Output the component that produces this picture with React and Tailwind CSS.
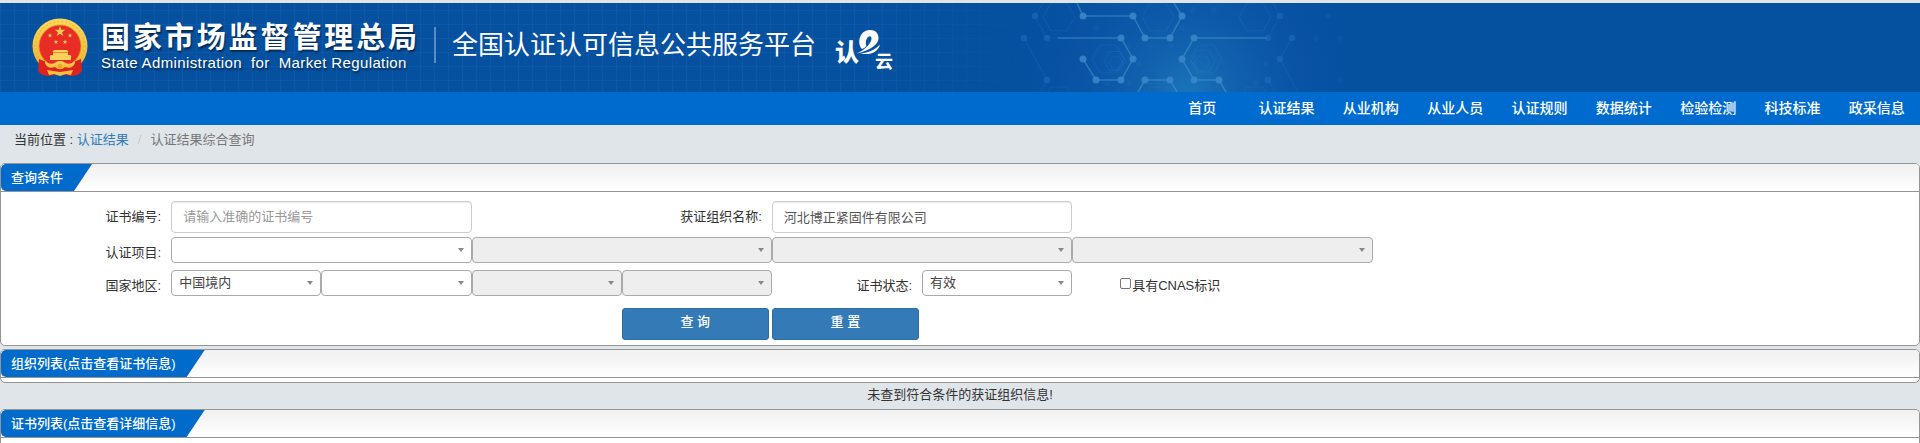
const FONT = "font-['Liberation_Sans','Noto_Sans_CJK_SC',sans-serif]";

const navItems = ["首页", "认证结果", "从业机构", "从业人员", "认证规则", "数据统计", "检验检测", "科技标准", "政采信息"];

const starPoints = (cx, cy, r) =>
  Array.from({ length: 10 }, (_, i) => {
    const a = (Math.PI / 5) * i - Math.PI / 2;
    const k = i % 2 ? r * 0.4 : r;
    return `${(cx + k * Math.cos(a)).toFixed(2)},${(cy + k * Math.sin(a)).toFixed(2)}`;
  }).join(" ");

const hexPoints = (cx, cy, r) =>
  Array.from({ length: 6 }, (_, i) => {
    const a = (Math.PI / 3) * i;
    return `${(cx + r * Math.cos(a)).toFixed(1)},${(cy + r * Math.sin(a)).toFixed(1)}`;
  }).join(" ");

function Emblem() {
  return (
    <svg viewBox="0 0 56 59" className="h-[59px] w-14 shrink-0" role="img" aria-label="国徽">
      <defs>
        <linearGradient id="gold" x1="0" y1="0" x2="0" y2="1">
          <stop offset="0" stopColor="#fbd85a" />
          <stop offset="1" stopColor="#eeb02c" />
        </linearGradient>
      </defs>
      <circle cx="28" cy="28" r="27.5" fill="url(#gold)" />
      <circle cx="28" cy="28" r="24.5" fill="none" stroke="#e0a32a" strokeWidth="1.5" strokeDasharray="2 2" opacity="0.4" />
      <circle cx="28" cy="28" r="21" fill="#ea2c27" stroke="#dd9426" strokeWidth="0.8" />
      <polygon points={starPoints(28, 13.5, 5.5)} fill="#f8cf4d" />
      <polygon points={starPoints(18, 17.5, 2.6)} fill="#f8c548" />
      <polygon points={starPoints(38, 17.5, 2.6)} fill="#f8c548" />
      <polygon points={starPoints(24, 24, 2.6)} fill="#f8c548" />
      <polygon points={starPoints(33, 24, 2.6)} fill="#f8c548" />
      <path d="M22 32h13l1.5 2h-16zM21 34.5h15v2.5H21zM18.5 37h20l1 2h-22zM18 39h21v3H18z" fill="#fad45a" />
      <path d="M7 41l10 4 11 3 11-3 10-4 1 12-4 4-7 1-11-2-11 2-7-1-4-4z" fill="#df221e" />
      <path d="M13 43c5 4 9 3 11 1 2-1.500 6-1.500 8 0 2 2 6 3 11-1 0 6-5 8-10 6-3 3-7 3-10 0-5 2-10 0-10-6z" fill="url(#gold)" />
      <path d="M15 52l6 1 7 1 7-1 6-1-2 5-5-1-6 2-6-2-5 1z" fill="#f5c240" />
      <circle cx="28" cy="48" r="2.200" fill="#e8a52b" />
    </svg>
  );
}

function CloudLogo() {
  return (
    <svg viewBox="0 0 60 44" className="h-11 w-[60px] shrink-0" fill="#fff" role="img" aria-label="认e云">
      <text x="1" y="32" fontSize="24" fontWeight="900" fontFamily="'Noto Sans CJK SC', sans-serif">认</text>
      <path d="M28 20C24.500 17 24.500 10 27 6C29.500 2 33 1 36.500 1C41.500 1 44.500 4.500 44.500 9C44.500 15 38 20.500 23 24.500C32 20 37.500 14 37.500 9.500C37.500 7 35.500 6.500 34 8C31.500 10.500 31.500 15 32.500 17C31 18.500 29.500 19.500 28 20Z" />
      <path d="M26 24.500C33 24 41 21 46 15.500C44 23 37 26.500 26 24.500Z" />
      <text x="41" y="39" fontSize="18" fontWeight="700" fontFamily="'Noto Sans CJK SC', sans-serif">云</text>
    </svg>
  );
}

const brightLines = [
  "79,0 85,13 135,13 147,35 172,35 184,13 176,0",
  "60,35 123,35 135,56 123,77 98,77 85,56",
  "270,35 196,35 184,56 196,77 221,77 228,89",
  "140,89 147,77 172,77 179,89",
];
const faintLines = ["45,0 37,13 49,35 70,35", "26,35 49,77 42,89", "275,0 282,13 270,35", "294,35 282,56 300,89", "270,77 277,89"];
const brightNodes = [[85, 13], [135, 13], [147, 35], [172, 35], [184, 13], [123, 35], [135, 56], [123, 77], [98, 77], [85, 56], [196, 35], [184, 56], [196, 77], [221, 77], [147, 77], [172, 77]];
const midNodes = [[37, 13], [49, 35], [26, 35], [49, 77], [282, 13], [270, 35], [294, 35], [282, 56], [270, 77]];
const dimNodes = [[152, 43], [173, 43], [131, 43], [184, 25], [141, 61], [184, 61], [131, 80], [208, 80], [195, 7], [216, 7], [318, 35], [330, 13], [342, 35], [342, 77], [268, 61], [258, 80], [109, 80], [98, 25]];
const hexes = [[160, 14, 16], [110, 56, 16], [117, 58, 11], [118, 60, 7], [208, 56, 16], [205, 58, 12], [204, 60, 8], [257, 14, 16], [61, 14, 16], [160, 98, 16], [160, 98, 20], [61, 98, 16], [257, 98, 16]];

function Molecules() {
  return (
    <svg viewBox="0 0 400 89" className="h-[89px] w-[400px]" fill="none" aria-hidden="true">
      <defs>
        <radialGradient id="glow" gradientUnits="userSpaceOnUse" cx="190" cy="89" r="190">
          <stop offset="0" stopColor="#1e7cbc" stopOpacity="0.85" />
          <stop offset="0.25" stopColor="#1668b4" stopOpacity="0.7" />
          <stop offset="0.6" stopColor="#0d56aa" stopOpacity="0.5" />
          <stop offset="1" stopColor="#0650a0" stopOpacity="0" />
        </radialGradient>
      </defs>
      <rect width="400" height="89" fill="url(#glow)" />
      {hexes.map(([x, y, r], i) => <polygon key={i} points={hexPoints(x, y, r)} stroke="#3c8ccc" strokeOpacity="0.18" />)}
      {faintLines.map((p) => <polyline key={p} points={p} stroke="#2a7cc8" strokeOpacity="0.25" />)}
      {brightLines.map((p) => <polyline key={p} points={p} stroke="#4a9ed0" strokeOpacity="0.5" strokeWidth="1.500" />)}
      {dimNodes.map(([x, y], i) => <circle key={i} cx={x} cy={y} r="3" fill="#2478c4" fillOpacity="0.15" />)}
      {midNodes.map(([x, y], i) => <circle key={i} cx={x} cy={y} r="3.300" fill="#1d6cc0" fillOpacity="0.6" />)}
      {brightNodes.map(([x, y], i) => <circle key={i} cx={x} cy={y} r="3.500" fill="#3a85c6" fillOpacity="0.9" />)}
    </svg>
  );
}

function Banner() {
  return (
    <header className="relative flex h-[89px] items-start overflow-hidden bg-[#0650a0]">
      <div className="absolute inset-y-0 left-0 w-[55%] bg-[linear-gradient(90deg,#1a66b4_1px,transparent_1px),linear-gradient(180deg,transparent_7px,#1a66b4_7px,#1a66b4_8px,transparent_8px)] mask-[linear-gradient(90deg,black_80%,transparent)] bg-[size:14px_14px] opacity-35" />
      <div className="absolute top-0 left-[52%]"><Molecules /></div>
      <div className="relative flex items-start pt-[15px] pl-8">
        <Emblem />
        <div className="ml-[13px] pt-[3px] text-white [text-shadow:1px_2px_2px_rgba(0,0,0,0.5)]">
          <p className="text-[29px] leading-[34px] font-bold tracking-widest whitespace-nowrap">国家市场监督管理总局</p>
          <p className="text-[15px] leading-4 tracking-wide whitespace-pre">State Administration  for  Market Regulation</p>
        </div>
        <div className="mt-[9px] ml-3.5 h-9 w-0.5 bg-[#5a8cc4]" />
        <h1 className="mt-[9px] ml-4 text-[26px] leading-9 whitespace-nowrap text-white">全国认证认可信息公共服务平台</h1>
        <div className="mt-[11px] ml-[18px]"><CloudLogo /></div>
      </div>
    </header>
  );
}

function Panel({ title, children, open }) {
  return (
    <section className={`overflow-hidden border border-[#959595] bg-white ${open ? "rounded-t-[5px] border-b-0" : "rounded-[5px]"}`}>
      <div className="flex border-b border-[#959595] bg-linear-to-b from-[#f0f0f0] to-white">
        <h2 className="h-[27px] rounded-l-[5px] bg-[#006bcb] pr-[29px] pl-2.5 text-[13px] leading-[27px] font-medium text-white [clip-path:polygon(0_0,100%_0,calc(100%_-_18px)_100%,0_100%)]">
          {title}
        </h2>
      </div>
      {children}
    </section>
  );
}

function Select({ label, id, value = "", disabled, className = "" }) {
  return (
    <div className={`relative ${className}`}>
      <select
        id={id}
        aria-label={label}
        disabled={disabled}
        defaultValue={value}
        className="block h-[26px] w-full appearance-none rounded border border-[#aaa] bg-white pr-5 pl-[7px] text-[13px] text-[#444] opacity-100 disabled:bg-[#eee]"
      >
        <option value={value}>{value}</option>
      </select>
      <svg viewBox="0 0 6 4" className="pointer-events-none absolute top-[11px] right-2 h-1 w-1.5" fill="#888" aria-hidden="true">
        <path d="M0 0h6L3 4z" />
      </svg>
    </div>
  );
}

function Label({ htmlFor, className = "", children }) {
  return <label htmlFor={htmlFor} className={`pr-2.5 text-right whitespace-nowrap ${className}`}>{children}</label>;
}

const inputClass = "h-8 w-full rounded border border-[#ccc] bg-white px-[11px] pb-0.5 text-[13px] text-[#555] shadow-[inset_0_1px_1px_rgba(0,0,0,0.075)] placeholder:text-[#999]";
const buttonClass = "h-8 rounded-[3px] border border-[#2e6da4] bg-[#337ab7] pb-1 text-[13px] font-medium text-white";

export default function App() {
  return (
    <div className={`${FONT} min-h-screen overflow-x-hidden bg-[#e0e5e9] pt-[3px] text-[13px] text-[#333]`}>
      <Banner />
      <nav className="flex h-[33px] justify-end bg-[#006bcf]">
        <ul className="mr-px grid w-[759px] grid-cols-9">
          {navItems.map((item) => (
            <li key={item}>
              <a href="#" className="block text-center text-sm leading-[33px] font-medium text-white">{item}</a>
            </li>
          ))}
        </ul>
      </nav>

      <div className="flex h-[38px] items-start px-3.5 pt-[5px] leading-5">
        <span className="whitespace-pre">当前位置 : </span>
        <a href="#" className="text-[#337ab7]">认证结果</a>
        <span className="px-[9px] text-[#ccc]">/</span>
        <span className="text-[#777]">认证结果综合查询</span>
      </div>

      <main className="flex flex-col">
        <Panel title="查询条件">
          <form className="pt-[9px] pr-24 pb-[5px] pl-5" onSubmit={(e) => e.preventDefault()}>
            <div className="grid grid-cols-12">
              <Label htmlFor="certNo" className="leading-[31px]">证书编号:</Label>
              <div className="col-span-2"><input id="certNo" type="text" placeholder="请输入准确的证书编号" className={inputClass} /></div>
              <Label htmlFor="orgName" className="col-span-2 leading-[31px]">获证组织名称:</Label>
              <div className="col-span-2"><input id="orgName" type="text" defaultValue="河北博正紧固件有限公司" className={inputClass} /></div>
            </div>
            <div className="mt-1 grid grid-cols-12">
              <Label htmlFor="project" className="leading-8">认证项目:</Label>
              <Select id="project" className="col-span-2" />
              <Select label="认证项目二级" disabled className="col-span-2" />
              <Select label="认证项目三级" disabled className="col-span-2" />
              <Select label="认证项目四级" disabled className="col-span-2" />
            </div>
            <div className="mt-px grid grid-cols-12">
              <Label htmlFor="region" className="leading-8">国家地区:</Label>
              <Select id="region" value="中国境内" />
              <Select label="省" />
              <Select label="市" disabled />
              <Select label="区县" disabled />
              <Label htmlFor="status" className="leading-8">证书状态:</Label>
              <Select id="status" value="有效" />
              <label className="col-span-3 flex items-start pl-12 leading-8">
                <input type="checkbox" className="mt-2 mr-px size-[11px] appearance-none rounded-[2px] border border-[#767676] bg-white" />
                具有CNAS标识
              </label>
            </div>
            <div className="mt-1.5 grid grid-cols-12">
              <div className="col-span-2 col-start-5 grid grid-cols-2">
                <button type="submit" className={`mr-[3px] ${buttonClass}`}>查 询</button>
                <button type="reset" className={`mr-[3px] ${buttonClass}`}>重 置</button>
              </div>
            </div>
          </form>
        </Panel>
        <div className="mt-[3px]">
          <Panel title="组织列表(点击查看证书信息)"><div className="h-1" /></Panel>
        </div>
        <p className="pt-0.5 pb-1 text-center leading-5">未查到符合条件的获证组织信息!</p>
        <Panel title="证书列表(点击查看详细信息)" open><div className="h-[5px]" /></Panel>
      </main>
    </div>
  );
}
